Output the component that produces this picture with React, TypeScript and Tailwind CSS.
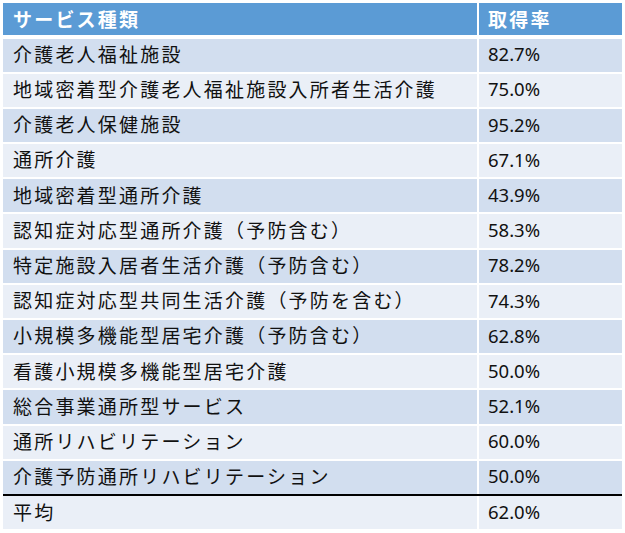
import React from "react";

const rows: [string, string][] = [
  ["介護老人福祉施設", "82.7%"],
  ["地域密着型介護老人福祉施設入所者生活介護", "75.0%"],
  ["介護老人保健施設", "95.2%"],
  ["通所介護", "67.1%"],
  ["地域密着型通所介護", "43.9%"],
  ["認知症対応型通所介護（予防含む）", "58.3%"],
  ["特定施設入居者生活介護（予防含む）", "78.2%"],
  ["認知症対応型共同生活介護（予防を含む）", "74.3%"],
  ["小規模多機能型居宅介護（予防含む）", "62.8%"],
  ["看護小規模多機能型居宅介護", "50.0%"],
  ["総合事業通所型サービス", "52.1%"],
  ["通所リハビリテーション", "60.0%"],
  ["介護予防通所リハビリテーション", "50.0%"],
];

const jp = "font-['Noto_Sans_CJK_JP',sans-serif] text-[19px] tracking-[2.2px]";
const num = "font-['Noto_Sans','Noto_Sans_CJK_JP',sans-serif] text-[18.5px]";

export default function App() {
  return (
    <div className="w-[625px] h-[533px] bg-white pt-[3px] pl-[3px]">
      <div className="w-[619px] flex flex-col">
        <div className="flex h-[32px] gap-[2px] mb-[3.5px]">
          <div className={`w-[474px] bg-[#5B9BD5] text-white font-bold flex items-center pl-[10px] ${jp}`}>
            サービス種類
          </div>
          <div className={`flex-1 bg-[#5B9BD5] text-white font-bold flex items-center pl-[9px] ${jp}`}>
            取得率
          </div>
        </div>
        <div className="flex flex-col gap-[2px]">
          {rows.map(([name, val], i) => {
            const bg = i % 2 === 0 ? "bg-[#D2DEEF]" : "bg-[#EAEFF7]";
            return (
              <div key={i} className="flex h-[33.2px] gap-[2px]">
                <div className={`w-[474px] ${bg} text-[#111] flex items-center pl-[10px] pb-[2px] ${jp}`}>
                  {name}
                </div>
                <div className={`flex-1 ${bg} text-[#111] flex items-center pl-[9px] pb-[2px] ${num}`}>
                  {val}
                </div>
              </div>
            );
          })}
        </div>
        <div className="h-[2px] bg-black mt-[0.5px]" />
        <div className="flex h-[33px] gap-[2px]">
          <div className={`w-[474px] bg-[#EAEFF7] text-[#111] flex items-center pl-[10px] pb-[2px] ${jp}`}>
            平均
          </div>
          <div className={`flex-1 bg-[#EAEFF7] text-[#111] flex items-center pl-[9px] pb-[2px] ${num}`}>
            62.0%
          </div>
        </div>
      </div>
    </div>
  );
}
